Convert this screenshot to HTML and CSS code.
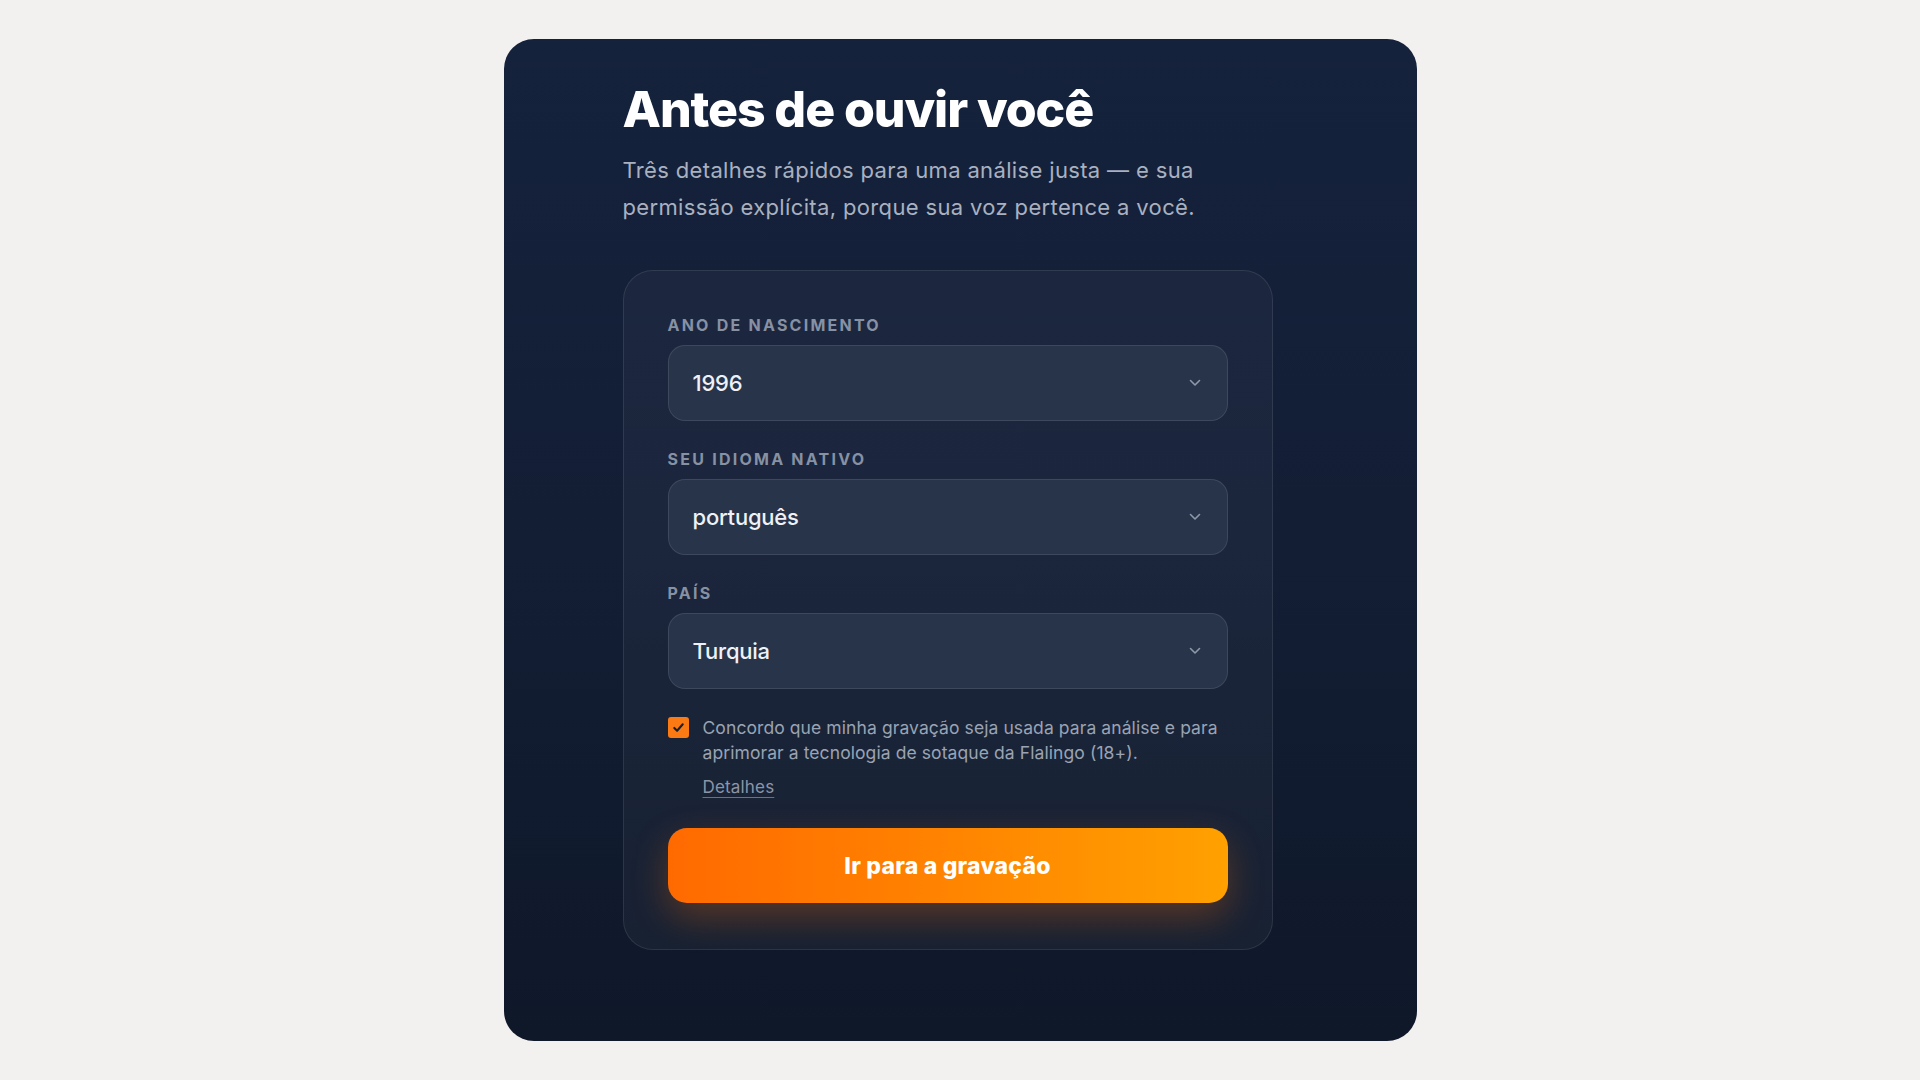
FILE: index.html
```html
<!DOCTYPE html>
<html lang="pt">
<head>
<meta charset="utf-8">
<title>Antes de ouvir você</title>
<link rel="stylesheet" href="styles.css">
</head>
<body>
<main class="card">
  <div class="content">
    <h1 class="title">Antes de ouvir você</h1>
    <p class="subtitle">Três detalhes rápidos para uma análise justa — e sua permissão explícita, porque sua voz pertence a você.</p>
    <form class="form-card">
      <div class="field">
        <label class="label">ANO DE NASCIMENTO</label>
        <div class="select"><span class="value">1996</span><svg class="chev" viewBox="0 0 12 8" width="12" height="8"><path d="M1.5 1.5 L6 6 L10.5 1.5" fill="none" stroke="currentColor" stroke-width="1.6" stroke-linecap="round" stroke-linejoin="round"/></svg></div>
      </div>
      <div class="field">
        <label class="label">SEU IDIOMA NATIVO</label>
        <div class="select"><span class="value">português</span><svg class="chev" viewBox="0 0 12 8" width="12" height="8"><path d="M1.5 1.5 L6 6 L10.5 1.5" fill="none" stroke="currentColor" stroke-width="1.6" stroke-linecap="round" stroke-linejoin="round"/></svg></div>
      </div>
      <div class="field">
        <label class="label">PAÍS</label>
        <div class="select"><span class="value">Turquia</span><svg class="chev" viewBox="0 0 12 8" width="12" height="8"><path d="M1.5 1.5 L6 6 L10.5 1.5" fill="none" stroke="currentColor" stroke-width="1.6" stroke-linecap="round" stroke-linejoin="round"/></svg></div>
      </div>
      <div class="consent">
        <span class="checkbox"><svg viewBox="0 0 16 16" width="15" height="15"><path d="M3.5 8.5 L6.5 11.5 L12.5 4.5" fill="none" stroke="#1b1f2a" stroke-width="2.2" stroke-linecap="round" stroke-linejoin="round"/></svg></span>
        <div class="consent-text">
          <p>Concordo que minha gravação seja usada para análise e para aprimorar a tecnologia de sotaque da Flalingo (18+).</p>
          <a class="details" href="#">Detalhes</a>
        </div>
      </div>
      <button type="button" class="cta">Ir para a gravação</button>
    </form>
  </div>
</main>
</body>
</html>
```
FILE: styles.css
```css
* { box-sizing: border-box; }
html, body { margin: 0; padding: 0; }
body {
  background: #f3f1ef;
  font-family: "Inter", "Noto Sans", sans-serif;
  height: 1080px;
  padding: 39px 0;
}
.card {
  width: 913px;
  height: 1002px;
  margin: 0 auto;
  border-radius: 30px;
  background: linear-gradient(180deg, #15223c 0%, #131e35 50%, #0f1829 100%);
  padding-top: 40px;
  overflow: hidden;
}
.content {
  width: 690px;
  margin-left: 119px;
}
.title {
  margin: 0;
  color: #ffffff;
  font-weight: 800;
  font-size: 50px;
  line-height: 60px;
  letter-spacing: -0.022em;
}
.subtitle {
  margin: 13px 0 0;
  color: #a9b1c0;
  font-size: 22px;
  line-height: 37px;
  letter-spacing: 0.016em;
  max-width: 670px;
}
.form-card {
  margin-top: 44px;
  width: 650px;
  border-radius: 30px;
  border: 1px solid rgba(255,255,255,0.09);
  background: rgba(255,255,255,0.035);
  padding: 45px 44px 46px;
  display: flex;
  flex-direction: column;
}
.field { display: flex; flex-direction: column; margin-bottom: 29px; }
.field:nth-child(3) { margin-bottom: 26px; }
.label {
  color: #8791a4;
  font-size: 16px;
  font-weight: 700;
  letter-spacing: 0.14em;
  line-height: 18px;
  margin-bottom: 11px;
}
.select {
  height: 76px;
  border-radius: 17px;
  background: #28344a;
  border: 1px solid rgba(255,255,255,0.1);
  display: flex;
  align-items: center;
  justify-content: space-between;
  padding: 0 26px 0 24px;
}
.value { color: #eef1f5; font-size: 22px; font-weight: 500; letter-spacing: -0.01em; }
.chev { color: #8f98aa; }
.consent { display: flex; gap: 14px; align-items: flex-start; }
.checkbox {
  flex: none;
  width: 21px; height: 21px;
  margin-top: 2px;
  border-radius: 3px;
  background: #fb7a14;
  display: flex; align-items: center; justify-content: center;
}
.consent-text p {
  margin: 0;
  color: #9aa3b3;
  font-size: 17.5px;
  line-height: 25px;
  letter-spacing: 0.005em;
}
.details {
  display: inline-block;
  margin-top: 12px;
  color: #8c95a6;
  font-size: 17px;
  line-height: 20px;
  letter-spacing: 0.01em;
  text-decoration: underline;
  text-underline-offset: 4px;
  text-decoration-color: rgba(140,149,166,0.7);
}
.cta {
  margin-top: 31px;
  height: 75px;
  border: none;
  border-radius: 19px;
  background: linear-gradient(90deg, #ff6a00 0%, #ff8400 50%, #ffa100 100%);
  color: #ffffff;
  font-family: inherit;
  font-size: 23px;
  font-weight: 800;
  letter-spacing: 0.01em;
  box-shadow: 0 14px 36px rgba(255,110,0,0.28);
  cursor: pointer;
}
```
